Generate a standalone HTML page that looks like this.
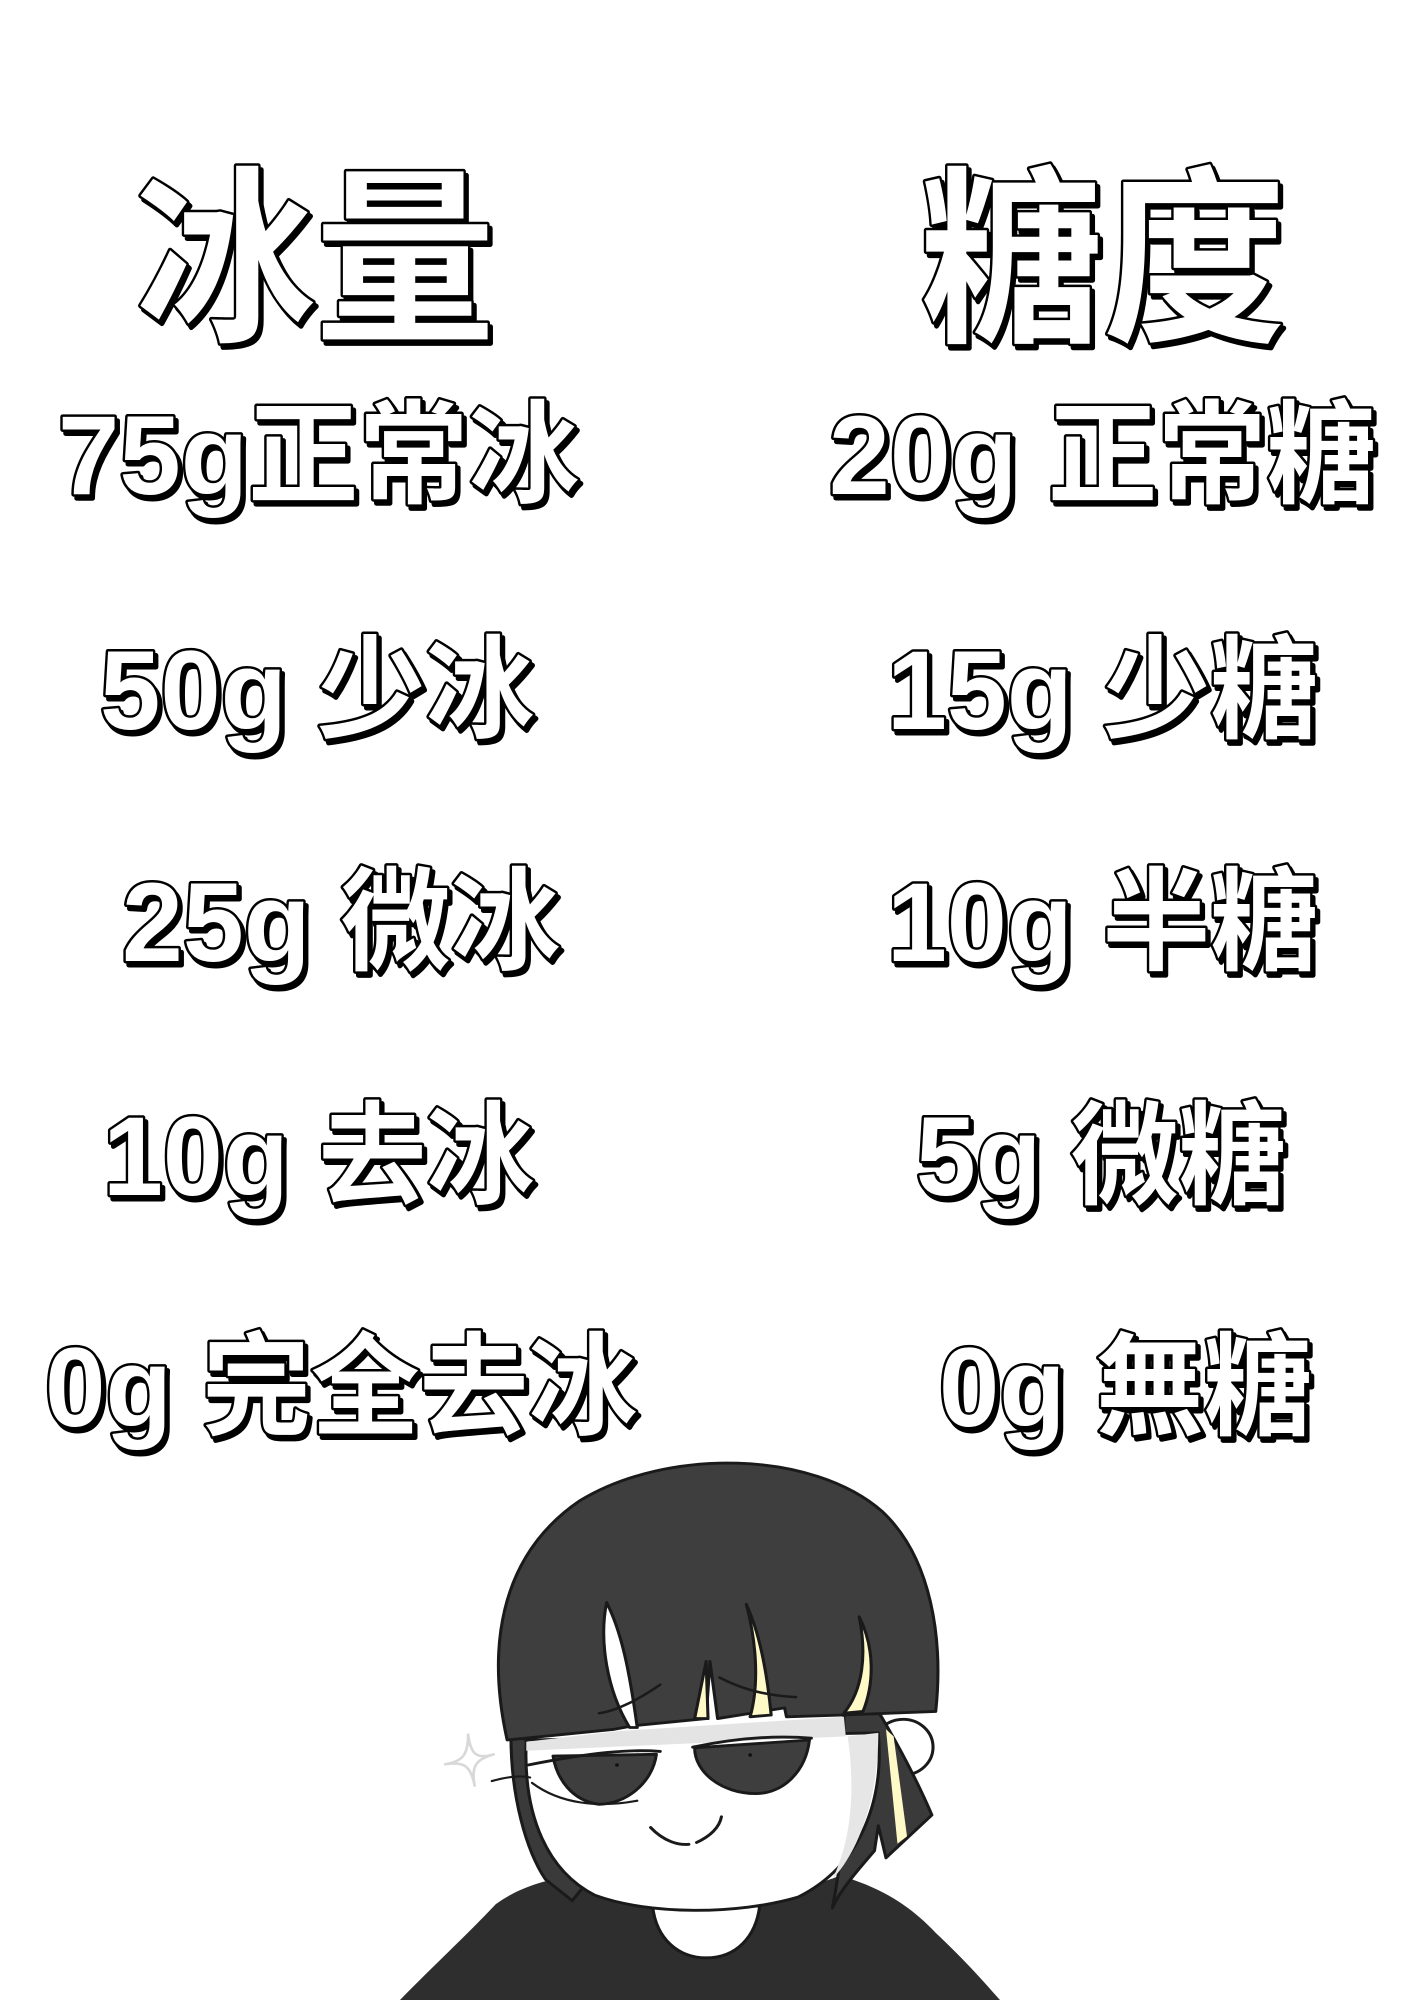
<!DOCTYPE html>
<html><head><meta charset="utf-8"><style>
html,body{margin:0;padding:0;background:#fff;}
body{width:1414px;height:2000px;position:relative;overflow:hidden;}
svg{position:absolute;left:0;top:0;}
.t{fill:#fff;stroke:#000;stroke-width:5px;paint-order:stroke fill;stroke-linejoin:round;}
.sh{fill:#000;stroke:#000;stroke-width:5px;stroke-linejoin:round;}
</style></head><body>
<svg width="1414" height="2000" viewBox="0 0 1414 2000">
<g font-family="Liberation Sans, Noto Sans CJK SC, sans-serif" font-weight="700">
<g class="sh" transform="translate(3,4)">
<text x="135" y="327" font-size="190" textLength="360" lengthAdjust="spacingAndGlyphs">冰量</text>
<text x="920" y="327" font-size="190" textLength="366" lengthAdjust="spacingAndGlyphs">糖度</text>
<text x="58" y="494" font-size="112" textLength="521" lengthAdjust="spacingAndGlyphs">75g正常冰</text>
<text x="100" y="729" font-size="112" textLength="434" lengthAdjust="spacingAndGlyphs">50g 少冰</text>
<text x="122" y="961" font-size="112" textLength="438" lengthAdjust="spacingAndGlyphs">25g 微冰</text>
<text x="103" y="1195" font-size="112" textLength="431" lengthAdjust="spacingAndGlyphs">10g 去冰</text>
<text x="45" y="1426" font-size="112" textLength="592" lengthAdjust="spacingAndGlyphs">0g 完全去冰</text>
<text x="829" y="494" font-size="112" textLength="547" lengthAdjust="spacingAndGlyphs">20g 正常糖</text>
<text x="887" y="729" font-size="112" textLength="431" lengthAdjust="spacingAndGlyphs">15g 少糖</text>
<text x="887" y="961" font-size="112" textLength="431" lengthAdjust="spacingAndGlyphs">10g 半糖</text>
<text x="916" y="1195" font-size="112" textLength="370" lengthAdjust="spacingAndGlyphs">5g 微糖</text>
<text x="939" y="1426" font-size="112" textLength="373" lengthAdjust="spacingAndGlyphs">0g 無糖</text>
</g>
<g class="t">
<text x="135" y="327" font-size="190" textLength="360" lengthAdjust="spacingAndGlyphs">冰量</text>
<text x="920" y="327" font-size="190" textLength="366" lengthAdjust="spacingAndGlyphs">糖度</text>
<text x="58" y="494" font-size="112" textLength="521" lengthAdjust="spacingAndGlyphs">75g正常冰</text>
<text x="100" y="729" font-size="112" textLength="434" lengthAdjust="spacingAndGlyphs">50g 少冰</text>
<text x="122" y="961" font-size="112" textLength="438" lengthAdjust="spacingAndGlyphs">25g 微冰</text>
<text x="103" y="1195" font-size="112" textLength="431" lengthAdjust="spacingAndGlyphs">10g 去冰</text>
<text x="45" y="1426" font-size="112" textLength="592" lengthAdjust="spacingAndGlyphs">0g 完全去冰</text>
<text x="829" y="494" font-size="112" textLength="547" lengthAdjust="spacingAndGlyphs">20g 正常糖</text>
<text x="887" y="729" font-size="112" textLength="431" lengthAdjust="spacingAndGlyphs">15g 少糖</text>
<text x="887" y="961" font-size="112" textLength="431" lengthAdjust="spacingAndGlyphs">10g 半糖</text>
<text x="916" y="1195" font-size="112" textLength="370" lengthAdjust="spacingAndGlyphs">5g 微糖</text>
<text x="939" y="1426" font-size="112" textLength="373" lengthAdjust="spacingAndGlyphs">0g 無糖</text>
</g>
</g>
</svg>
<svg style="left:400px;top:1440px" width="600" height="560" viewBox="0 0 1568 1568" preserveAspectRatio="none">
<g stroke="#1a1a1a" stroke-width="8" stroke-linejoin="round" stroke-linecap="round">
<path d="M0,1568 C80,1480 180,1380 250,1300 C300,1260 360,1240 400,1230 L660,1300 L940,1300 L1150,1220 C1250,1250 1330,1300 1400,1380 C1470,1450 1520,1510 1568,1568 Z" fill="#2e2e2e" stroke="none"/>
<path d="M660,1305 C670,1400 730,1450 800,1450 C880,1450 930,1390 940,1305 Z" fill="#fff"/>
<circle cx="1315" cy="860" r="78" fill="#fff"/>
<path d="M290,830 C290,1000 330,1150 380,1230 L450,1290 L480,1250 C400,1150 360,1000 340,840 Z" fill="#3a3a3a"/>
<path d="M1160,770 L1250,760 C1300,850 1350,950 1390,1050 L1270,1170 L1250,1080 L1240,1150 C1200,1200 1150,1260 1130,1310 C1150,1200 1170,1050 1160,900 Z" fill="#3a3a3a"/>
<path d="M1270,810 L1300,1130 L1325,1110 L1290,830 Z" fill="#fff9c8" stroke="none"/>
<path d="M330,840 L1250,820 C1265,1000 1210,1190 1040,1280 C880,1330 650,1330 510,1275 C390,1210 320,1060 330,840 Z" fill="#fff"/>
<path d="M1170,830 L1250,820 C1250,1000 1200,1150 1130,1230 C1180,1120 1190,980 1170,830 Z" fill="#e6e6e6" stroke="none"/>
<path d="M280,840 C230,600 250,330 470,170 C700,20 1080,30 1260,200 C1390,330 1420,560 1400,760 L1160,770 L1010,775 L1005,750 L830,780 L810,620 L800,780 L610,800 L560,810 Z" fill="#3e3e3e"/>
<path d="M330,845 L570,815 L1160,775 L1165,830 L330,870 Z" fill="#e4e4e4" stroke="none"/>
<path d="M540,455 C520,560 540,700 600,805 L620,805 C600,650 580,540 540,455 Z" fill="#fff"/>
<path d="M905,460 C930,560 940,680 915,775 L970,770 C960,660 940,540 905,460 Z" fill="#fff9c8"/>
<path d="M1200,495 C1220,600 1210,700 1160,765 L1210,760 C1240,680 1240,580 1200,495 Z" fill="#fff9c8"/>
<path d="M800,620 L770,780 L805,780 Z" fill="#fff9c8"/>
<path d="M400,885 L670,880 C660,960 590,1020 520,1020 C450,1010 410,950 400,885 Z" fill="#3e3e3e"/>
<path d="M770,862 L1070,840 C1060,930 1000,990 930,990 C840,990 770,930 770,862 Z" fill="#3e3e3e"/>
<path d="M335,910 C500,875 600,865 680,872" fill="none"/>
<path d="M765,860 C900,830 1000,828 1075,835" fill="none"/>
<path d="M345,960 C420,1020 520,1030 620,1010" fill="none" stroke-width="6"/>
<path d="M240,955 C290,940 320,940 340,945" fill="none" stroke-width="6"/>
<path d="M520,765 C560,760 620,730 680,685" fill="none" stroke-width="7"/>
<path d="M835,665 C880,690 940,715 1035,720" fill="none" stroke-width="7"/>
<circle cx="567" cy="910" r="5" fill="#111" stroke="none"/>
<circle cx="915" cy="882" r="5" fill="#111" stroke="none"/>
<path d="M655,1085 C690,1125 730,1135 755,1132" fill="none"/>
<path d="M775,1127 C810,1110 835,1085 840,1055" fill="none"/>
<path d="M178,825 C185,880 200,895 245,880 C200,895 185,910 195,968 C185,910 165,900 118,908 C165,900 178,880 178,825 Z" fill="#fff" stroke="#d8d8d8" stroke-width="7"/>
</g>
</svg>
</body></html>
